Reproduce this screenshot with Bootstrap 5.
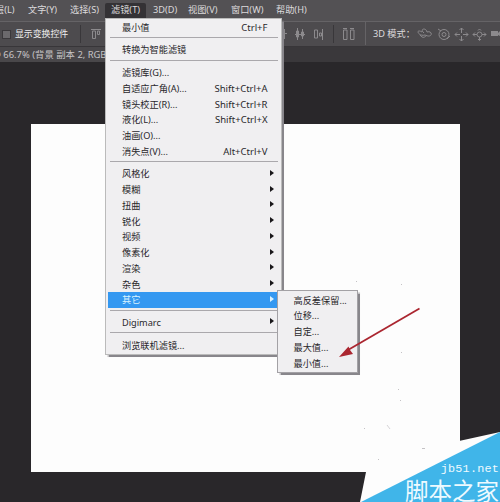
<!DOCTYPE html>
<html lang="zh-CN">
<head>
<meta charset="utf-8">
<title>滤镜</title>
<link rel="stylesheet" href="https://cdn.jsdelivr.net/npm/bootstrap@5.3.0/dist/css/bootstrap.min.css">
<style>
body{width:500px;height:502px;background:#29272a;font-family:"Noto Sans","Noto Sans CJK SC",sans-serif;font-size:9.2px;line-height:15.75px;color:#dcdadc}
.menubar{height:21px;background:#535154}
.menubar span{line-height:20px;white-space:nowrap;flex:none}
.menubar .first{width:33px;margin-left:-5px}
.menubar .open{background:#343235;width:41px;height:15px;line-height:14px;margin-top:3px;border-radius:2px 2px 0 0;text-align:center}
.w35{width:35px}.w42{width:42px}.w43{width:43px}.w45{width:45px}
.after-open{margin-left:7px}
.options{height:26px;background:#4d4b4e;border-top:1px solid #656366;border-bottom:1px solid #383639}
.tick{width:9px;height:9px;margin-left:2px;background:#6b696c;border:1px solid #3a383b}
.ticklabel{margin-left:4px;color:#eee;font-size:8.9px}
.tools{left:0;top:-1px}
.mode{left:373px}
.tabs{height:15px;background:#3a383b}
.tabs div{background:#49474a;width:120px;height:15px;line-height:15px;color:#c6c4c6;font-size:9.4px;text-indent:-7.5px}
.stage{height:440px;padding:62px 0 0 31px}
.sheet{width:429px;height:348px;background:#fdfdfd}
.popup{background:#f0eff1;color:#29272b;border:1px solid #a3a1a5;box-shadow:1.5px 1.5px 1px #88868b}
.main{left:105px;top:17.6px;width:176.5px;height:337.6px;padding:1.2px 0 0 1.5px;border-color:#bbb}
.sub{left:277px;top:290px;width:81px;height:83px;padding:1.5px 0 0 15.5px}
.entry{height:15.75px;padding:0 13px 0 14.5px;white-space:nowrap}
.entry kbd{all:unset;font-size:9.5px}
.more{padding-right:7px}
.more::after{content:"";border:3px solid transparent;border-left:4px solid #19171a;border-right:0;margin-bottom:3px}
.chosen{background:#3498f1;color:#d8f2ff}
.chosen::after{border-left-color:#d8f2ff}
.rule{height:6.9px;padding:1.5px 3px 0 2px}
.rule::before{content:"";display:block;height:1px;background:#aaa8ac}
.overlay{left:0;top:0;width:500px;height:502px;pointer-events:none}
.brand{right:1px;top:459px;color:#eefaff;text-align:right}
.site{font:11.8px/20px "Liberation Mono",monospace;height:19px;letter-spacing:.2px}
.brandname{font:23.5px/24px "Noto Sans CJK SC",sans-serif;white-space:nowrap}
</style>
<script src="https://cdn.jsdelivr.net/npm/bootstrap@5.3.0/dist/js/bootstrap.bundle.min.js"></script>
</head>
<body class="position-relative overflow-hidden m-0">
<header>
<nav class="menubar d-flex">
<span class="first">层(L)</span><span class="w42">文字(Y)</span><span class="w35">选择(S)</span><span class="open">滤镜(T)</span><span class="w35 after-open">3D(D)</span><span class="w43">视图(V)</span><span class="w45">窗口(W)</span><span>帮助(H)</span>
</nav>
<div class="options position-relative d-flex align-items-center">
<i class="tick"></i><span class="ticklabel">显示变换控件</span>
<svg class="tools position-absolute" width="500" height="26" viewBox="0 21 500 26" fill="none" stroke="#8c8a8d">
<path stroke="#39373a" d="M80.5 25V43M333.5 25V43"/><path stroke="#656366" d="M365.5 22V45"/>
<path d="M91 29.5H101M92.5 31V38.5H95.5V31ZM97.5 31V34.5H99.500V31Z"/>
<path d="M284.500 29V39M283 33.500H287M296.500 31V37H298.500V31ZM297.500 28V40M301.500 32V36H303.500V32ZM302.500 29V39M295 34.500H305M314.500 30V38H317.500V30ZM319.500 33V36H321.500V33ZM322.500 29V40M343.500 30H347V39.500H343.500ZM350.500 30H354V39.500H350.500ZM343 28.500H347M350 28.500H354"/>
<path d="M422 32C415 28 418 37 425 35C433 39 433 30 427 32C426 27 419 29 424 33M420 35C423 39 425 37 427 35"/>
<circle cx="444" cy="34.500" r="5"/><circle cx="444" cy="34.500" r="2"/><path d="M438 29L441 31M447 39L450 36"/>
<path d="M461.500 28V33M461.500 36V41M455 34.500H460M463 34.500H468M459.500 30L461.500 28L463.500 30M459.500 39L461.500 41L463.500 39M457 32.500L455 34.500L457 36.500M466 32.500L468 34.500L466 36.500"/>
<circle cx="479.500" cy="34.500" r="2.500"/><path d="M473 34.500H477M482 34.500H486M479.500 37V40M478 30.500L479.500 29L481 30.500M475 32.500L473 34.500L475 36.500M484 32.500L486 34.500L484 36.500M478 39L479.500 40.500L481 39"/>
<path fill="#8c8a8d" stroke="none" d="M491 31H498V36H491ZM498 33L500 31V36L498 35Z"/>
</svg>
<span class="mode position-absolute">3D 模式：</span>
</div>
<div class="tabs"><div class="text-nowrap">@ 66.7% (背景 副本 2, RGB/8)</div></div>
</header>
<main class="stage"><div class="sheet"></div></main>

<section class="popup main position-absolute">
<div class="entry d-flex justify-content-between">最小值<kbd>Ctrl+F</kbd></div>
<div class="rule"></div>
<div class="entry">转换为智能滤镜</div>
<div class="rule"></div>
<div class="entry">滤镜库(G)...</div>
<div class="entry d-flex justify-content-between">自适应广角(A)...<kbd>Shift+Ctrl+A</kbd></div>
<div class="entry d-flex justify-content-between">镜头校正(R)...<kbd>Shift+Ctrl+R</kbd></div>
<div class="entry d-flex justify-content-between">液化(L)...<kbd>Shift+Ctrl+X</kbd></div>
<div class="entry">油画(O)...</div>
<div class="entry d-flex justify-content-between">消失点(V)...<kbd>Alt+Ctrl+V</kbd></div>
<div class="rule"></div>
<div class="entry more d-flex justify-content-between align-items-center">风格化</div>
<div class="entry more d-flex justify-content-between align-items-center">模糊</div>
<div class="entry more d-flex justify-content-between align-items-center">扭曲</div>
<div class="entry more d-flex justify-content-between align-items-center">锐化</div>
<div class="entry more d-flex justify-content-between align-items-center">视频</div>
<div class="entry more d-flex justify-content-between align-items-center">像素化</div>
<div class="entry more d-flex justify-content-between align-items-center">渲染</div>
<div class="entry more d-flex justify-content-between align-items-center">杂色</div>
<div class="entry more chosen d-flex justify-content-between align-items-center">其它</div>
<div class="rule"></div>
<div class="entry more d-flex justify-content-between align-items-center">Digimarc</div>
<div class="rule"></div>
<div class="entry">浏览联机滤镜...</div>
</section>
<section class="popup sub position-absolute text-nowrap">
<div>高反差保留...</div><div>位移...</div><div>自定...</div><div>最大值...</div><div>最小值...</div>
</section>

<svg class="overlay position-absolute" viewBox="0 0 500 502">
<path fill="#fdfdfd" d="M366 472L360 502H500V432L459 441L440 465Z"/>
<path fill="#40b5e9" d="M361 502L500 432V502Z"/>
<path stroke="#ab2630" stroke-width="1.800" d="M419.500 308.500L348 350"/>
<path fill="#ab2630" d="M339 357L348.500 346.500L350 350L353 354Z"/>
<path fill="#c4c2c5" d="M401 284h1v1h-1zM356 281h1v1h-1zM401 352h1v1h-1zM398 389h1v1h-1zM400 400h1v1h-1zM364 428h1v1h-1zM422 448h3v1h-3zM378 459h1v1h-1z"/>
<path stroke="#c4c2c5" stroke-width=".7" d="M387 425L390 429"/>
</svg>
<div class="brand position-absolute"><div class="site">jb51.net</div><div class="brandname">脚本之家</div></div>
</body>
</html>
